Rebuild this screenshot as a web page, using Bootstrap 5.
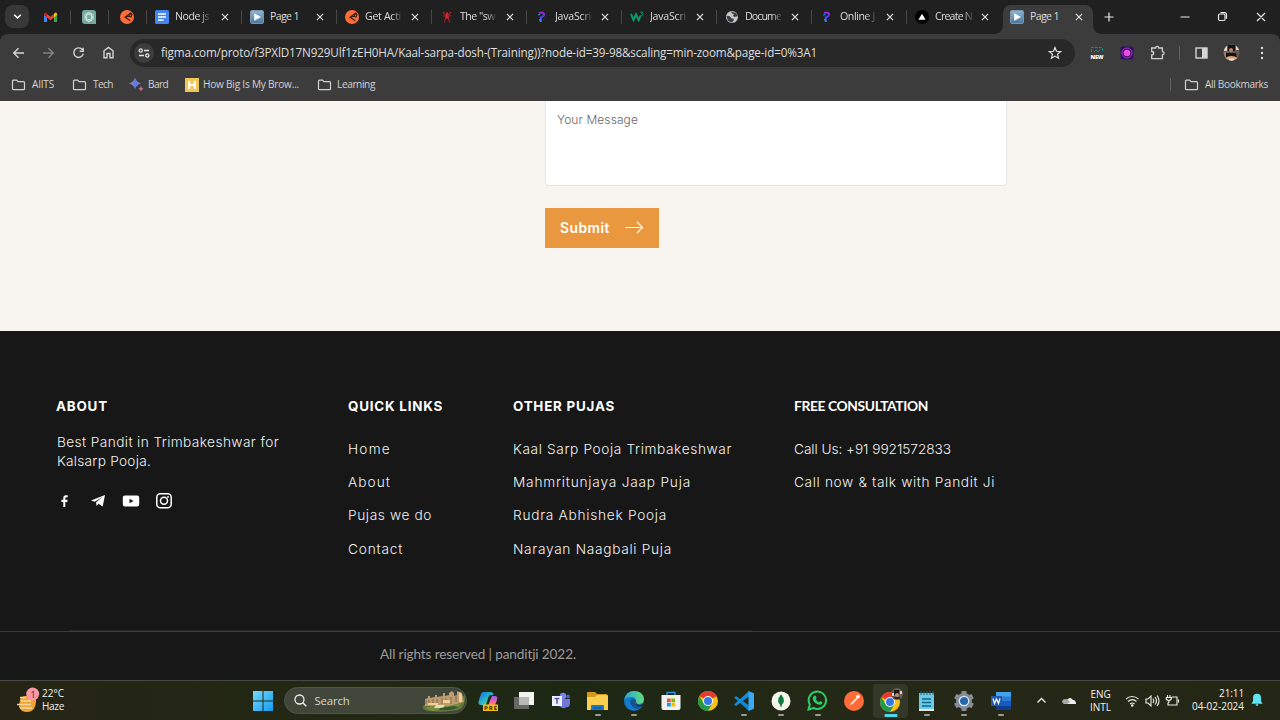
<!DOCTYPE html>
<html lang="en">
<head>
<meta charset="utf-8">
<meta name="viewport" content="width=device-width, initial-scale=1">
<title>Page 1</title>
<link rel="stylesheet" href="https://cdn.jsdelivr.net/npm/bootstrap@5.3.0/dist/css/bootstrap.min.css">
<style>
:root{--ui:"Open Sans","Noto Sans",sans-serif;--site:Inter,"Open Sans",sans-serif}
body{width:1280px;height:720px;overflow:hidden;font-family:var(--ui);background:#171717}
svg{display:block;flex:none}
[data-w]{white-space:nowrap;display:inline-block}
/* browser frame */
.tabstrip{height:34px;background:#202020;color:#dcdcdc;font-size:10.6px}
.tab-menu{width:24px;height:23px;border-radius:8px;background:#383838;margin:5px 0 0 5px}
.pinned{width:38px;height:34px}
.pinned svg{position:relative;left:-1px}
.tab{width:95px;height:34px;padding-left:8px}
.tab::before,.pinned::before{content:"";width:1px;height:14px;background:#484848;flex:none}
.pinned.lead-pin::before{background:transparent}
.tab::before{margin-left:-8px;margin-right:8px}
.tab-title{flex:none;margin-left:6px;-webkit-mask-image:linear-gradient(90deg,#000 74%,rgba(0,0,0,.2));mask-image:linear-gradient(90deg,#000 74%,rgba(0,0,0,.2))}
.tab-title.whole{-webkit-mask-image:none;mask-image:none}
.tab-x{margin-left:auto;margin-right:11px}
.tab.active{width:90px;height:29px;margin-top:5px;margin-left:2px;padding-bottom:5px;background:#3c3c3c;border-radius:8px 8px 0 0;position:relative}
.tab.active::before{position:absolute;left:0;bottom:0;margin:0;width:8px;height:8px;transform:translateX(-8px);background:radial-gradient(circle at 0 0,transparent 7.5px,#3c3c3c 8px)}
.tab.active::after{content:"";position:absolute;right:-8px;bottom:0;width:8px;height:8px;background:radial-gradient(circle at 100% 0,transparent 7.5px,#3c3c3c 8px)}
.tab.active .tab-x{margin-right:9px}
.tab.active>svg:first-child{margin-left:-1px}
.chrome-bars{height:67px;background:#3c3c3c;color:#d2d2d2;border-radius:8px 8px 0 0}
.frame{background:#202020;height:101px}
.tool-row{height:38px}
.omnibox{width:945px;height:28px;border-radius:14px;background:#282828;color:#dedede;font-size:11.7px}
.omnibox [data-w]{padding-bottom:0}
.site-info{width:20px;height:20px;border-radius:50%;background:#3c3c3c}
.book-row{height:25px;font-size:10.1px}
/* page */
.form-zone{height:230px;background:#f8f4ef;padding-left:545px;font-family:var(--site)}
.message-box{width:462px;height:85px;background:#fff;border:1px solid #e9e7e6;border-top:0;border-radius:0 0 4px 4px;padding:10px 11px;color:#686868;font-size:12px;font-weight:300;line-height:17px}
.btn-submit{width:114px;height:40px;margin-top:22px;border-radius:0;border:0;background:#ea983f;color:#fff;font-size:13.8px;font-weight:600;padding:0 15px}
.site-footer{height:349px;background:#171717;color:#f2f2f2;font-family:var(--site);font-size:13.7px;font-weight:300}
.foot-cols{height:300px;padding:65px 0 0 56px}
.foot-cols h6{font-size:13.4px;font-weight:700;color:#fff;line-height:20px;margin:0}
.foot-cols h6.humanist{font-family:Lato,sans-serif;font-size:13.8px}
.foot-cols ul{margin:22.5px 0 0}
.foot-cols li{height:33.35px;line-height:20px}
.about-col{width:292px}.links-col{width:165px}.pujas-col{width:281px}
.about-copy{margin:17px 0 0 1px;line-height:18.7px}
.rule-a{height:1px;width:683px;margin-left:69px;background:#262626}
.rule-b{height:1px;background:#3b3b3b}
.copyright{font-family:Lato,sans-serif;font-weight:400;font-size:13.6px;color:#9b9b9b;padding-left:380px;height:45px}
/* taskbar */
.taskbar{height:40px;background:linear-gradient(90deg,#252516,#222814 25%,#1d2814 45%,#242817 65%,#242716);border-top:1px solid #464a40;color:#f2f2f2;font-size:10px;line-height:13px}
.weather{width:244.5px;padding-left:16px}
.task-label{position:relative;top:-1px}
.task-app{width:36.67px;height:39px;position:relative}
.task-app.open::after{content:"";position:absolute;left:50%;bottom:4px;width:6px;height:2px;border-radius:1px;background:#9a9c93;transform:translateX(-50%)}
.task-app.current::after{width:13px;height:3px;bottom:3px;background:#4bd8ea}
.task-app.current::before{content:"";position:absolute;inset:3px 1px 2px;background:#333829;border-radius:4px}
.task-app svg{position:relative}
.search-pill{width:184px;height:27px;border-radius:14px;background:#40463a;border:1px solid #50554a;margin-left:2.5px;margin-right:2px;font-size:11.4px;color:#d5d8d0}
</style>
</head>
<body class="d-flex flex-column m-0">
<svg width="0" height="0" class="position-absolute" aria-hidden="true"><defs>
<symbol id="x" viewBox="0 0 10 10"><path d="M1.900 1.900l6.200 6.200M8.100 1.900L1.900 8.100" stroke="#e0e0e0" stroke-width="1.200"/></symbol>
<linearGradient id="pg" x2="0" y2="1"><stop stop-color="#8eb7d6"/><stop offset="1" stop-color="#4c759c"/></linearGradient>
<symbol id="play" viewBox="0 0 14 14"><rect x=".5" y=".5" width="13" height="13" rx="1.500" fill="url(#pg)" stroke="#7895ad"/><path d="M4.200 3.200L11 7l-6.800 3.800z" fill="#fff"/></symbol>
<symbol id="swirl" viewBox="0 0 14 14"><circle cx="7" cy="7" r="7" fill="#ff6c37"/><path d="M10.800 3L5 7.200l5.300 3.600M5 7.200l4-.9 1.800-3.300q2 1.500.2 4l-2-.7" stroke="#3a2019" stroke-width="1.100" fill="none"/></symbol>
<linearGradient id="qg" x2="0" y2="1"><stop stop-color="#9a22e8"/><stop offset=".5" stop-color="#4b3df0"/><stop offset="1" stop-color="#159bf0"/></linearGradient>
<symbol id="quest" viewBox="0 0 14 14"><path d="M4 3.200Q7.500 1.500 9 3.500 9.500 6.500 5.800 7.300V12" stroke="url(#qg)" stroke-width="2" fill="none"/><path d="M3.200 5l2-.5M4.700 9v1.500" stroke="#08b5ed" stroke-width="1"/></symbol>
<symbol id="folder" viewBox="0 0 14 12"><path d="M1 2.200Q1 1.200 2 1.200h3l1.500 1.500H12q1 0 1 1v6q0 1-1 1H2q-1 0-1-1z" fill="none" stroke="currentColor" stroke-width="1.200"/></symbol>
<symbol id="chrome" viewBox="0 0 20 20"><circle cx="10" cy="10" r="10" fill="#fbc116"/><path d="M10 10L1.340 5A10 10 0 0 1 18.660 5z" fill="#e33b2e"/><path d="M1.340 5A10 10 0 0 0 10 20L14.300 12.500 10 10 5.700 12.500z" fill="#229a4a"/><path d="M10 5h8.660" stroke="#e33b2e"/><circle cx="10" cy="10" r="5" fill="#fff"/><circle cx="10" cy="10" r="4" fill="#3478e5"/></symbol>
</defs></svg>

<header class="frame">
 <div class="tabstrip d-flex align-items-center">
  <div class="tab-menu d-flex align-items-center justify-content-center align-self-start"><svg width="9" height="7" viewBox="0 0 9 7"><path d="M1.200 1.700l3.300 3.300 3.300-3.300" fill="none" stroke="#fff" stroke-width="1.500"/></svg></div>
  <div class="pinned lead-pin d-flex align-items-center" style="margin-left:3px"><svg class="mx-auto" width="13" height="11" viewBox="0 0 13 11"><path d="M0 1.500V10h3V4z" fill="#4285f4"/><path d="M13 1.500V10h-3V4z" fill="#34a853"/><path d="M3 2L6.500 4.800 10 2v3.500L6.500 8.300 3 5.500z" fill="#ea4335"/><path d="M0 2.500Q0 0 2 .8l1 1v3.700L0 3.300z" fill="#c5221f"/><path d="M13 2.500Q13 0 11 .8l-1 1v3.700l3-2.200z" fill="#fbbc04"/></svg></div>
  <div class="pinned d-flex align-items-center"><svg class="mx-auto" width="14" height="14" viewBox="0 0 14 14"><path d="M3 0h8q3 0 3 3v11H3q-3 0-3-3V3q0-3 3-3z" fill="#75a99c"/><g fill="none" stroke="#eefaf6" stroke-width=".6"><ellipse cx="7" cy="7" rx="2.600" ry="4.700"/><ellipse cx="7" cy="7" rx="2.600" ry="4.700" transform="rotate(60 7 7)"/><ellipse cx="7" cy="7" rx="2.600" ry="4.700" transform="rotate(120 7 7)"/></g></svg></div>
  <div class="pinned d-flex align-items-center"><svg class="mx-auto" width="14" height="14"><use href="#swirl"/></svg></div>
  <div class="tab d-flex align-items-center"><svg width="14" height="14" viewBox="0 0 14 14"><rect width="14" height="14" rx="1.500" fill="#4384f3"/><path d="M3 4h8M3 7h8M3 10h5.500" stroke="#fff" stroke-width="1.300"/></svg><span class="tab-title" data-w="34">Node js</span><svg width="10" height="10" class="tab-x"><use href="#x"/></svg></div>
  <div class="tab d-flex align-items-center"><svg width="14" height="14"><use href="#play"/></svg><span class="tab-title whole" data-w="29">Page 1</span><svg width="10" height="10" class="tab-x"><use href="#x"/></svg></div>
  <div class="tab d-flex align-items-center"><svg width="14" height="14"><use href="#swirl"/></svg><span class="tab-title" data-w="36">Get Acti</span><svg width="10" height="10" class="tab-x"><use href="#x"/></svg></div>
  <div class="tab d-flex align-items-center"><svg width="14" height="14" viewBox="0 0 14 14"><path d="M3 2l2.500 3h3L11 2M3 5.500l3 1M11 5.500l-3 1M6 8l-2 4.500M8 8l2 4.500" fill="none" stroke="#a91c28" stroke-width="1.200"/><path d="M6 2.500h2l.7 6H5.300z" fill="#d52533"/></svg><span class="tab-title" data-w="35">The "sw</span><svg width="10" height="10" class="tab-x"><use href="#x"/></svg></div>
  <div class="tab d-flex align-items-center"><svg width="14" height="14"><use href="#quest"/></svg><span class="tab-title" data-w="36">JavaScri</span><svg width="10" height="10" class="tab-x"><use href="#x"/></svg></div>
  <div class="tab d-flex align-items-center"><svg width="14" height="14" viewBox="0 0 14 14"><path d="M1 4l2.500 6L6 4.500 8.500 10 10.500 6" fill="none" stroke="#099b67" stroke-width="2"/><path d="M10.500 2h2l-1 1.500q1.500 0 1 1.500-.5 1-2 .4" fill="none" stroke="#099b67"/></svg><span class="tab-title" data-w="36">JavaScri</span><svg width="10" height="10" class="tab-x"><use href="#x"/></svg></div>
  <div class="tab d-flex align-items-center"><svg width="14" height="14" viewBox="0 0 14 14"><circle cx="7" cy="7" r="6" fill="#c3c6c9"/><path d="M1.500 6h3l2 2.500H8l1 1.500-2 2.500L3 11zM6 1.500l1 2 2 .5-1 2 1.500 1 3.500-1L11 3z" fill="#3a3e41"/></svg><span class="tab-title" data-w="36">Docume</span><svg width="10" height="10" class="tab-x"><use href="#x"/></svg></div>
  <div class="tab d-flex align-items-center"><svg width="14" height="14"><use href="#quest"/></svg><span class="tab-title" data-w="35">Online J</span><svg width="10" height="10" class="tab-x"><use href="#x"/></svg></div>
  <div class="tab d-flex align-items-center"><svg width="14" height="14" viewBox="0 0 14 14"><circle cx="7" cy="7" r="7" fill="#000"/><path d="M7 3.700l3.600 6H3.400z" fill="#fff"/></svg><span class="tab-title" data-w="37">Create N</span><svg width="10" height="10" class="tab-x"><use href="#x"/></svg></div>
  <div class="tab active d-flex align-items-center"><svg width="14" height="14"><use href="#play"/></svg><span class="tab-title whole" data-w="29">Page 1</span><svg width="10" height="10" class="tab-x"><use href="#x"/></svg></div>
  <svg width="180" height="18" viewBox="0 0 180 18" fill="none" stroke="#e9e9e9" stroke-width="1.200"><path d="M11.500 9h9M16 4.500v9M87.500 9h9"/><rect x="125.500" y="6" width="6.500" height="6.500" rx="1.200"/><path d="M127.500 4.700h4q2 0 2 2v4M164 5l8 8M172 5l-8 8"/></svg>
 </div>
 <div class="chrome-bars">
  <div class="tool-row d-flex align-items-center">
   <svg width="130" height="28" viewBox="0 0 130 28" fill="none" stroke="#d5d5d5" stroke-width="1.400"><path d="M24 14H14M18.500 9.200L13.700 14l4.800 4.800"/><path d="M43 14h10M48.500 9.200l4.800 4.800-4.800 4.800" stroke="#838383"/><path d="M82.500 10.800A4.800 4.800 0 1 0 83.300 14.700M83.200 8.700v3.500h-3.600"/><path d="M104 18.800v-7L108.500 8.400 113 11.800v7h-3V14.500h-3v4.300z"/></svg>
   <div class="omnibox d-flex align-items-center">
    <div class="site-info d-flex align-items-center justify-content-center ms-1"><svg width="12" height="10" viewBox="0 0 12 10" fill="none" stroke="#e6e6e6" stroke-width="1.300"><circle cx="2.700" cy="2.500" r="1.600"/><path d="M6 2.500h5M1 7.500h5"/><circle cx="9.300" cy="7.500" r="1.600"/></svg></div>
    <span data-w="656" style="margin-left:7px">figma.com/proto/f3PXlD17N929Ulf1zEH0HA/Kaal-sarpa-dosh-(Training))?node-id=39-98&amp;scaling=min-zoom&amp;page-id=0%3A1</span>
    <svg class="ms-auto" width="14" height="14" viewBox="0 0 14 14" style="margin-right:13px"><path d="M7 1.500l1.500 3.800 4.100.3-3.100 2.600 1 4L7 10.100l-3.500 2.100 1-4L1.400 5.600l4.100-.3z" fill="none" stroke="#ddd" stroke-width="1.200"/></svg>
   </div>
   <svg width="205" height="28" viewBox="1075 39 205 28"><path d="M1091.500 52v-4.500h11v4.500" fill="none" stroke="#168b86" stroke-dasharray="3 1"/><path d="M1094 52l2-2 2 2 2-2" stroke="#168b86" fill="none"/><text x="1090.500" y="58.500" font-family="Open Sans" font-weight="800" font-size="5.500" fill="#fff" textLength="13">NEW</text><rect x="1120.500" y="46.500" width="13" height="13" rx="2" fill="#35105f"/><circle cx="1127" cy="53" r="5" fill="none" stroke="#9b34cd"/><circle cx="1127" cy="53" r="3.300" fill="#ef4be2"/><path d="M1151.700 48h4q0-1.700 1.500-1.700t1.500 1.700h3.700v3.700q1.700 0 1.700 1.500t-1.700 1.500v3.900h-10.700v-3.700q2 0 2-1.700t-2-1.700z" fill="none" stroke="#cfcfcf" stroke-width="1.300"/><path d="M1179.500 46.500v13" stroke="#656565"/><rect x="1196" y="48" width="11" height="10" fill="none" stroke="#d5d5d5" stroke-width="1.400"/><path d="M1202 48h5v10h-5z" fill="#d5d5d5"/><clipPath id="av"><circle cx="1231.500" cy="52.500" r="8"/></clipPath><g clip-path="url(#av)"><path d="M1223 44h17v17h-17z" fill="#69564c"/><path d="M1223 44h4v7h-4zM1236 44h4v6h-4z" fill="#ddd4cc"/><path d="M1228 45h7v6h-7z" fill="#171413"/><circle cx="1231" cy="50" r="2" fill="#bd8167"/><path d="M1226 53h10l1 5h-12z" fill="#121316"/><path d="M1225 58q6-4 13 0v3h-13z" fill="#dba682"/><path d="M1229 59h5v2h-5z" fill="#fff"/><path d="M1223 52h3v6h-3z" fill="#a17656"/></g><g fill="#ddd"><circle cx="1262" cy="48" r="1.200"/><circle cx="1262" cy="53" r="1.200"/><circle cx="1262" cy="58" r="1.200"/></g></svg>
  </div>
  <nav class="book-row d-flex align-items-center">
   <svg width="15" height="12" style="margin-left:11px"><use href="#folder"/></svg><span data-w="22" style="margin-left:6px">AIITS</span>
   <svg width="15" height="12" style="margin-left:18px"><use href="#folder"/></svg><span data-w="20" style="margin-left:6px">Tech</span>
   <svg width="15" height="15" viewBox="0 0 15 15" style="margin-left:16px"><defs><linearGradient id="bd"><stop stop-color="#c67185"/><stop offset=".5" stop-color="#557ee8"/><stop offset="1" stop-color="#9570c7"/></linearGradient></defs><path d="M6 .5q1.300 4.500 6 6-4.700 1.300-6 6-1.300-4.700-6-6 4.700-1.500 6-6z" fill="url(#bd)"/><path d="M12 9q.4 2.200 2.500 2.700Q12.400 12.200 12 14.500q-.4-2.300-2.500-2.800Q11.600 11.200 12 9z" fill="#c57197"/></svg><span data-w="20" style="margin-left:4px">Bard</span>
   <svg width="14" height="14" viewBox="0 0 14 14" style="margin-left:17px"><path d="M0 0h14v14H0z" fill="#efc758"/><path d="M4.200 3v8M9.800 3v8M4 7h6" stroke="#fff" stroke-width="2"/></svg><span data-w="96" style="margin-left:4px">How Big Is My Brow...</span>
   <svg width="15" height="12" style="margin-left:18px"><use href="#folder"/></svg><span data-w="38" style="margin-left:5px">Learning</span>
   <span class="vr ms-auto" style="height:13px;align-self:center;margin-right:13px"></span><svg width="15" height="12"><use href="#folder"/></svg><span data-w="63" style="margin:0 12px 0 6px">All Bookmarks</span>
  </nav>
 </div>
</header>

<main class="form-zone">
 <div class="message-box"><span data-w="81">Your Message</span></div>
 <button class="btn btn-submit d-flex align-items-center justify-content-between"><span data-w="50">Submit</span><svg width="19" height="13" viewBox="0 0 19 13" style="margin-top:-1px"><path d="M.5 6.500h17M12 1l5.500 5.500L12 12" fill="none" stroke="#fff" stroke-width="1.200"/></svg></button>
</main>

<footer class="site-footer">
 <div class="foot-cols d-flex">
  <section class="about-col"><h6><span data-w="52">ABOUT</span></h6>
   <p class="about-copy"><span data-w="222">Best Pandit in Trimbakeshwar for</span><br><span data-w="94">Kalsarp Pooja.</span></p>
   <svg width="120" height="18" viewBox="56 492 120 18" style="margin-top:22px"><g fill="#fff"><path d="M63.300 507v-5.100h-1.900v-2.200h1.900V498q0-2.800 2.700-2.800h1.700v2h-1.200q-1.200 0-1.200 1.100v1.400h2.300l-.3 2.200h-2v5.100z"/><path d="M91 500.500l14-5.500-2.300 11.500-4.200-2.700-2 2.200-.4-3.700 6.300-5.300-7.700 4.700z"/><path fill-rule="evenodd" d="M125 495.500h12q2.200 0 2.200 2v7q0 2-2.200 2h-12q-2.200 0-2.200-2v-7q0-2 2.200-2zm4.500 3.200v4.600l4-2.300z"/></g><g fill="none" stroke="#fff" stroke-width="1.500"><rect x="156.800" y="493.800" width="14.400" height="14" rx="3.500"/><circle cx="164" cy="500.800" r="3.500"/></g><circle cx="168" cy="496.900" r=".9" fill="#fff"/></svg>
  </section>
  <section class="links-col"><h6><span data-w="95">QUICK LINKS</span></h6><ul class="list-unstyled"><li><span data-w="43">Home</span></li><li><span data-w="43">About</span></li><li><span data-w="84">Pujas we do</span></li><li><span data-w="55">Contact</span></li></ul></section>
  <section class="pujas-col"><h6><span data-w="102">OTHER PUJAS</span></h6><ul class="list-unstyled"><li><span data-w="219">Kaal Sarp Pooja Trimbakeshwar</span></li><li><span data-w="178">Mahmritunjaya Jaap Puja</span></li><li><span data-w="154">Rudra Abhishek Pooja</span></li><li><span data-w="159">Narayan Naagbali Puja</span></li></ul></section>
  <section><h6 class="humanist"><span data-w="134">FREE CONSULTATION</span></h6><ul class="list-unstyled"><li><span data-w="157">Call Us: +91 9921572833</span></li><li><span data-w="201">Call now &amp; talk with Pandit Ji</span></li></ul></section>
 </div>
 <div class="rule-a" style="margin-top:-1px"></div><div class="rule-b"></div>
 <div class="copyright d-flex align-items-center"><span data-w="196">All rights reserved | panditji 2022.</span></div>
</footer>

<div class="taskbar d-flex align-items-center">
 <div class="weather d-flex align-items-center"><svg width="24" height="28" viewBox="16 684 24 28" style="margin-top:-2px"><path d="M20 698q0-4 7-4t9 4q0 12-9 12-6 0-8-5z" fill="#f1a436"/><path d="M20 695.500h6M21 699h10M17 702.500h14M20 706h12" stroke="#efd8a0" stroke-width="1.300"/><circle cx="32.700" cy="692" r="6.500" fill="#fb98a3"/><text x="30.500" y="695.500" font-family="Open Sans" font-size="9" fill="#4b2026">1</text></svg><div class="task-label" style="margin-left:2px"><span data-w="22">22°C</span><br><span data-w="22">Haze</span></div></div>
 <div class="task-app d-flex align-items-center justify-content-center"><svg width="20" height="20" viewBox="0 0 20 20"><defs><linearGradient id="win" x2="1" y2="1"><stop stop-color="#74d9fb"/><stop offset="1" stop-color="#159bf0"/></linearGradient></defs><path d="M0 0h9.500v9.500H0zM10.500 0H20v9.500h-9.500zM0 10.500h9.500V20H0zM10.500 10.500H20V20h-9.500z" fill="url(#win)"/></svg></div>
 <div class="search-pill d-flex align-items-center"><svg width="13" height="13" viewBox="0 0 13 13" style="margin-left:9px"><path d="M8.800 8.800L12.300 12.300" stroke="#eee" stroke-width="1.500"/><circle cx="5.500" cy="5.500" r="4.500" fill="none" stroke="#eee" stroke-width="1.300"/></svg><span data-w="35" style="margin-left:8px">Search</span>
  <svg class="ms-auto" width="42" height="22" viewBox="0 0 42 22" style="margin-right:1px"><path d="M0 16q8-8 20-6t22-5q1 9-4 14-14 4-33 2-6-1-5-5z" fill="#65753d"/><path d="M2 14V9l3-1V6h2v2l5-1V5h2v2l6-1V3h2v3l4-1V3l3-2 2 2v3l3-1V1l5 2 2 9-15 4H2z" fill="#bf9c70"/><path d="M3 10v4m3-4v4m4-5v5m4-5v5m5-6v6m4-6v5m10-7v6m-5-5v7" stroke="#776048" stroke-width=".8"/><path d="M5 13h10v2H5zM20 10h7v3h-7zM36 2l3 2v8h-3z" fill="#efcf98"/><path d="M2 18q12-4 22-2l15-3-5 5-25 3z" fill="#7c8e3e"/><path d="M13 15h9l-2 3h-9z" fill="#dfdfbc"/><path d="M17 18l14-2 5 1-8 3H16z" fill="#315b2c"/></svg></div>
 <div class="task-app d-flex align-items-center justify-content-center"><svg width="20" height="20" viewBox="0 0 20 20"><defs><linearGradient id="cp" x2="1" y2="1"><stop stop-color="#176df1"/><stop offset=".5" stop-color="#27b4c6"/><stop offset="1" stop-color="#8ddf5e"/></linearGradient><linearGradient id="cq" x2="0" y2="1"><stop stop-color="#965df0"/><stop offset=".5" stop-color="#ee61b0"/><stop offset="1" stop-color="#fb9867"/></linearGradient></defs><path d="M5 1h8q2 0 2.500 3h-3q-1.500 0-2.200 2.500L8 14H3Q-.5 14 .7 10L3 3Q3.700 1 5 1z" fill="url(#cp)"/><path d="M14 5h3q3 0 2 4l-2 5-7 1 3-8z" fill="url(#cq)"/><path d="M5 13.500h15v6.500H5z" fill="#f8bf13"/><text x="6" y="19" font-size="6" font-weight="700" font-family="Open Sans" textLength="13" fill="#302700">PRE</text></svg></div>
 <div class="task-app d-flex align-items-center justify-content-center"><svg width="20" height="20" viewBox="0 0 20 20"><path d="M5 1h15v13H5z" fill="#f3f3f0"/><path d="M0 6h15v12H0z" fill="#666963"/><path d="M5 6h10v8H5z" fill="#b9b9b7"/></svg></div>
 <div class="task-app d-flex align-items-center justify-content-center"><svg width="20" height="20" viewBox="0 0 20 20"><circle cx="12" cy="5" r="3.200" fill="#7b83eb"/><circle cx="17" cy="5.500" r="2" fill="#5059c9"/><path d="M8 8h11v5q-1 4-4 3-2 3-7-1z" fill="#7077d6"/><path d="M1 5h10v10H1z" fill="#eeefff"/><path d="M3.500 7.500h5M6 7.500v5.200" stroke="#4e55b5" stroke-width="1.500"/></svg></div>
 <div class="task-app open d-flex align-items-center justify-content-center"><svg width="21" height="20" viewBox="0 0 21 20"><path d="M0 2q0-1 1-1h7l2 2h10v5H0z" fill="#d59a17"/><path d="M0 6h8l2-2h10q1 0 1 1v14H0z" fill="#f9cf50"/><path d="M4 15q0-1 1-1h11q1 0 1 1v4H4z" fill="#1978c9"/><path d="M6 17h9" stroke="#0b58a4"/></svg></div>
 <div class="task-app open d-flex align-items-center justify-content-center"><svg width="20" height="20" viewBox="0 0 20 20"><defs><linearGradient id="eg"><stop stop-color="#25a5d9"/><stop offset="1" stop-color="#65dc7b"/></linearGradient></defs><circle cx="10" cy="10" r="10" fill="#137bcc"/><path d="M0 9Q2 0 10 0q9 0 10 8 0 5-6 5-4 0-2-3 0-4-5-4Q2 6 0 9z" fill="url(#eg)"/><path d="M7 8q-2 6 3 9 4 2 8-1-4-1-6-3-1-1 0-3-1-3-5-2z" fill="#155393"/><path d="M12.500 10q-1 3.500 2.500 4 3 0 5-2l-1.500 3.500q-4 .5-6-1.500-1.500-2 0-4z" fill="#222818"/></svg></div>
 <div class="task-app d-flex align-items-center justify-content-center"><svg width="20" height="20" viewBox="0 0 20 20"><path d="M6 5V1.500h8V5" fill="none" stroke="#2d9bd3" stroke-width="1.300"/><path d="M.5 4h19v13q0 2-2 2h-15q-2 0-2-2z" fill="#f1f1f1"/><path d="M6 7.500h3.700v3.700H6z" fill="#f25022"/><path d="M10.300 7.500H14v3.700h-3.700z" fill="#7fba00"/><path d="M6 11.800h3.700v3.700H6z" fill="#00a4ef"/><path d="M10.300 11.800H14v3.700h-3.700z" fill="#ffb900"/></svg></div>
 <div class="task-app d-flex align-items-center justify-content-center"><svg width="20" height="20"><use href="#chrome"/></svg></div>
 <div class="task-app open d-flex align-items-center justify-content-center"><svg width="20" height="20" viewBox="0 0 20 20"><path d="M0 6.500L2 5l13 9.500V20z" fill="#1486d0"/><path d="M0 13.500L2 15 15 5.500V0z" fill="#168bd8"/><path d="M14.500 0L20 2.300v15.400L14.500 20z" fill="#38a9f2"/></svg></div>
 <div class="task-app open d-flex align-items-center justify-content-center"><svg width="20" height="20" viewBox="0 0 20 20"><circle cx="10" cy="10" r="9.500" fill="#f5f5ec"/><path d="M10 3.500q6 6.500 0 11.500-6-5 0-11.500z" fill="#16884b"/><path d="M10 4v12" stroke="#075c38"/></svg></div>
 <div class="task-app open d-flex align-items-center justify-content-center"><svg width="21" height="21" viewBox="0 0 21 21"><path d="M1.500 19.500l1.300-5A8.700 8.700 0 1 1 6.500 18z" fill="none" stroke="#2bcf6a" stroke-width="2"/><path d="M7.200 5.700q1.200-.8 1.800.8l.6 1.500-.9 1.200q1.300 2.300 3.400 3l1.100-1.100 2.200 1.100q.2 2.500-2.700 2.500-6.200-1.200-7-6 .1-2 1.500-3z" fill="#2bcf6a"/></svg></div>
 <div class="task-app d-flex align-items-center justify-content-center"><svg width="20" height="20" viewBox="0 0 20 20"><circle cx="10" cy="10" r="10" fill="#ff6c37"/><path d="M5.500 14.500l2-3 5-5q3-2 2 .5l-5.500 5.500z" fill="#ffe3d7"/><circle cx="14" cy="5.500" r="1.700" fill="#fff"/></svg></div>
 <div class="task-app open current d-flex align-items-center justify-content-center"><svg width="24" height="28" viewBox="0 0 24 28"><g transform="translate(1 5)"><svg width="20" height="20"><use href="#chrome"/></svg></g><circle cx="18" cy="7" r="6" fill="#675a4e"/><path d="M15 3h5v5h-5z" fill="#171412"/><circle cx="18" cy="8" r="2" fill="#bd8c70"/><path d="M15 10h6v2h-5z" fill="#25272a"/><path d="M21 4h2v3h-2zM13 6h2v3h-2z" fill="#ded4cb"/></svg></div>
 <div class="task-app open d-flex align-items-center justify-content-center"><svg width="18" height="20" viewBox="0 0 18 20"><path d="M1 2h15v17H1z" fill="#69cbe7"/><path d="M1 18h15v2H1z" fill="#eee4cc"/><path d="M3 0v4m3-4v4m3-4v4m3-4v4m3-4v4" stroke="#14657c"/><path d="M4 8h9M4 11.500h9M4 15h9" stroke="#126787" stroke-width="1.300"/></svg></div>
 <div class="task-app open d-flex align-items-center justify-content-center"><svg width="20" height="20" viewBox="0 0 20 20"><g fill="#858c95"><circle cx="10" cy="10" r="8"/><path d="M7.500 0h5v20h-5z"/><path d="M7.500 0h5v20h-5z" transform="rotate(60 10 10)"/><path d="M7.500 0h5v20h-5z" transform="rotate(120 10 10)"/></g><circle cx="10" cy="10" r="4.700" fill="#2167aa" stroke="#dcecf3" stroke-width="1.300"/></svg></div>
 <div class="task-app open d-flex align-items-center justify-content-center"><svg width="20" height="20" viewBox="0 0 20 20"><path d="M5 1h15v18H5z" fill="#2b7cd3"/><path d="M5 1h15v4.500H5z" fill="#41a5ee"/><path d="M5 10h15v9H5z" fill="#185abd"/><path d="M5 15h15v4H5z" fill="#103f91"/><path d="M0 5h11v10H0z" fill="#2458aa"/><path d="M2 7.500l1.500 5 2-4.500 2 4.500L9 7.500" fill="none" stroke="#fff" stroke-width="1.200"/></svg></div>
 <svg width="62" height="18" viewBox="0 1 62 18" class="ms-auto" style="margin-right:9px"><path d="M18.500 11.500l4-4 4 4" fill="none" stroke="#eee" stroke-width="1.300"/><path d="M46 13q-3-1-1-4h3q3-4 6 0 3 0 3 4z" fill="#eee"/><path d="M43 10q1-2 4-2 2 0 4 3l-3 2h-3q-2-1-2-3z" fill="#aaa"/></svg>
 <div class="text-center" style="width:21px;white-space:nowrap"><span data-w="20">ENG</span><br><span data-w="21">INTL</span></div>
 <svg width="58" height="16" viewBox="1123 692.500 58 16" style="margin-left:12px" fill="none" stroke="#eee" stroke-width="1.100"><path d="M1126 698.500q6-5 12.500 0M1128 701q4.300-3.700 8.500 0M1130 703.500q2.300-2 4.500 0"/><circle cx="1132.200" cy="705" r=".7" fill="#eee"/><path d="M1146 698.500h2l3-3v10l-3-3h-2zM1153 698q1.500 2.300 0 4.500M1155 696.500q3 3.800 0 7.500M1157 695q4 5.300 0 10.500"/><path d="M1172 696.500h5v8h-9V702M1178.500 699v3M1167.500 694.500v2M1170 694.500v2M1166 697h5.500q0 3-2.700 3t-2.800-3M1168.800 700v2.500"/></svg>
 <div class="text-end task-label" style="width:55px;margin-left:8px"><span data-w="25">21:11</span><br><span data-w="52">04-02-2024</span></div>
 <svg width="12" height="14" viewBox="0 0 12 14" style="margin:-1px 17px 0 7px"><path d="M6 .8q4 0 4 4V8l1.500 2.700H.5L2 8V4.800q0-4 4-4zM4.500 11.300h3q-.5 1.700-1.500 1.700t-1.500-1.700z" fill="#60e3f2"/></svg>
</div>
<script src="https://cdn.jsdelivr.net/npm/bootstrap@5.3.0/dist/js/bootstrap.bundle.min.js"></script>
<script>
// Track every label so that it fills its design width.
document.querySelectorAll('[data-w]').forEach(el => {
  const gap = (Number(el.dataset.w) - el.getBoundingClientRect().width) / el.textContent.length;
  el.style.letterSpacing = gap.toFixed(3) + 'px';
});
</script>
</body>
</html>
